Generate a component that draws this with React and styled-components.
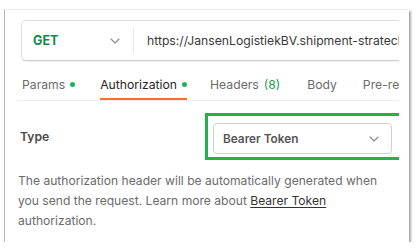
import React from "react";
import styled, { createGlobalStyle } from "styled-components";

const GlobalStyle = createGlobalStyle`
    html, body {
        margin: 0;
        padding: 0;
        background: #ffffff;
    }
    body {
        font-family: Inter, "Noto Sans", "Liberation Sans", sans-serif;
        -webkit-font-smoothing: antialiased;
    }
`;

const Card = styled.div`
    margin: 9px 0 0 4px;
    width: 405px;
    height: 233px;
    background: #ffffff;
    border-left: 1px solid #b8b8b8;
    border-top: 1px solid #ececec;
    box-shadow: 2px 2px 2px rgba(0, 0, 0, 0.35);
    box-sizing: border-box;
`;

const Content = styled.div`
    padding: 10px 0 0 12px;
    width: 394px;
    height: 100%;
    box-sizing: border-box;
    overflow: hidden;
`;

const UrlBar = styled.div`
    margin-left: 4px;
    width: 420px;
    height: 41px;
    display: flex;
    align-items: center;
    border: 1px solid #dedede;
    border-bottom-color: #cfcfcf;
    border-radius: 5px;
    box-sizing: border-box;
    box-shadow: 0 1px 1px rgba(0, 0, 0, 0.06);
`;

const Method = styled.div`
    flex-shrink: 0;
    width: 111px;
    padding: 0 13px 0 11px;
    box-sizing: border-box;
    display: flex;
    align-items: center;
    justify-content: space-between;
    font-size: 12.5px;
    font-weight: 700;
    color: #108a4c;
`;

const Divider = styled.div`
    flex-shrink: 0;
    width: 1px;
    height: 26px;
    background: #e6e6e6;
`;

const UrlText = styled.div`
    padding-left: 13px;
    font-size: 12.2px;
    color: #3a3a3a;
    white-space: nowrap;
`;

const Tabs = styled.div`
    margin-top: 10px;
    display: flex;
    border-bottom: 1px solid #ededed;
    width: 420px;
`;

const Tab = styled.div`
    flex-shrink: 0;
    display: flex;
    align-items: center;
    gap: 5px;
    height: 27px;
    margin-right: ${(p) => p.$gap || 25}px;
    padding-left: ${(p) => (p.$first ? 5 : 0)}px;
    font-size: 12.2px;
    color: ${(p) => (p.$active ? "#262626" : "#6b6b6b")};
    border-bottom: 2px solid ${(p) => (p.$active ? "#ff6c37" : "transparent")};
    white-space: nowrap;
`;

const Dot = styled.span`
    width: 5px;
    height: 5px;
    border-radius: 50%;
    background: #1fb25a;
`;

const Count = styled.span`
    color: #1e9e5b;
`;

const TypeRow = styled.div`
    margin-top: 12px;
    display: flex;
    align-items: center;
`;

const TypeLabel = styled.div`
    flex-shrink: 0;
    width: 188px;
    padding-left: 3px;
    box-sizing: border-box;
    font-size: 12.2px;
    font-weight: 600;
    color: #4a4a4a;
`;

const Highlight = styled.div`
    flex-shrink: 0;
    width: 220px;
    height: 47px;
    padding: 7px 0 0 5px;
    border: 3px solid #22b14c;
    border-right: none;
    box-sizing: border-box;
`;

const Select = styled.div`
    width: 179px;
    height: 31px;
    padding: 0 12px 0 9px;
    box-sizing: border-box;
    display: flex;
    align-items: center;
    justify-content: space-between;
    border: 1px solid #d0d0d0;
    border-radius: 4px;
    font-size: 11.8px;
    font-weight: 600;
    color: #555555;
`;

const Note = styled.p`
    margin: 11px 0 0 1px;
    font-size: 12.1px;
    line-height: 20px;
    color: #6b6b6b;
    white-space: nowrap;
`;

const Link = styled.span`
    color: #333333;
    text-decoration: underline;
    text-underline-offset: 2px;
`;

function Chevron() {
    return (
        <svg width="10" height="6" viewBox="0 0 10 6" fill="none">
            <path d="M1 1l4 4 4-4" stroke="#8a8a8a" strokeWidth="1.1" strokeLinecap="round" strokeLinejoin="round" />
        </svg>
    );
}

function App() {
    return (
        <>
            <GlobalStyle />
            <Card>
                <Content>
                    <UrlBar>
                        <Method>
                            GET
                            <Chevron />
                        </Method>
                        <Divider />
                        <UrlText>https://JansenLogistiekBV.shipment-stratechnologies.com</UrlText>
                    </UrlBar>

                    <Tabs>
                        <Tab $first>Params <Dot /></Tab>
                        <Tab $active $gap={23}>Authorization <Dot /></Tab>
                        <Tab $gap={27}>Headers <Count>(8)</Count></Tab>
                        <Tab $gap={26}>Body</Tab>
                        <Tab>Pre-request Script</Tab>
                    </Tabs>

                    <TypeRow>
                        <TypeLabel>Type</TypeLabel>
                        <Highlight>
                            <Select>
                                Bearer Token
                                <Chevron />
                            </Select>
                        </Highlight>
                    </TypeRow>

                    <Note>
                        The authorization header will be automatically generated when
                        <br />
                        you send the request. Learn more about <Link>Bearer Token</Link>
                        <br />
                        authorization.
                    </Note>
                </Content>
            </Card>
        </>
    );
}

export default App;
